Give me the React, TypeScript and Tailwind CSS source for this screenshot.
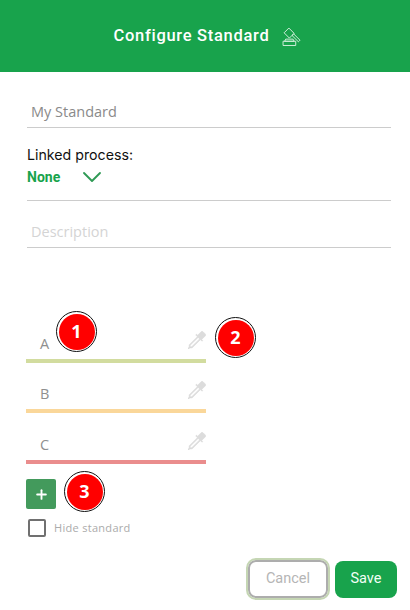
import { ChevronDown, Plus } from 'lucide-react'
import { BsEyedropper } from 'react-icons/bs'

function Badge({ n, className }: { n: number; className: string }) {
  return (
    <div className={`absolute flex h-[41px] w-[41px] items-center justify-center rounded-full border-[1.5px] border-[#111111] bg-white ${className}`}>
      <div className="flex h-[36px] w-[36px] items-center justify-center rounded-full bg-[#ff0000] font-['Open_Sans',sans-serif] text-[18px] font-bold text-white">
        {n}
      </div>
    </div>
  )
}

function Gavel() {
  return (
    <svg width="19" height="19" viewBox="0 0 18 18" fill="none" stroke="currentColor" strokeWidth="0.9" strokeLinejoin="round" className="text-[#d7f0df]">
      <path d="M2 5.5l4.5-4.5 5 5-4.5 4.5z" />
      <path d="M9.5 8l1.5-1.5 6 6-1.5 1.5z" />
      <path d="M3.5 11.5h7l1 2h-9z" />
      <path d="M1 13.5h12v4H1z" />
    </svg>
  )
}

function ColorRow({ label, color, className = '' }: { label: string; color: string; className?: string }) {
  return (
    <div className={`w-[180px] ${className}`}>
      <div className="flex h-[37px] justify-between">
        <span className="ml-[14px] mt-[12px] font-['Open_Sans',sans-serif] text-[14.5px] leading-[20px] text-[#8f8f8f]">{label}</span>
        <BsEyedropper size={18} stroke="currentColor" strokeWidth={0.5} className="mt-[9px] text-[#dcdcdc]" />
      </div>
      <div className={`h-[4px] ${color}`} />
    </div>
  )
}

export default function App() {
  return (
    <div className="h-[610px] w-[410px] overflow-hidden bg-white font-['Roboto',sans-serif]">
      <div className="flex h-[72px] items-center justify-center gap-[13px] bg-[#18a34c] pl-[5px]">
        <span className="text-[16.5px] font-medium tracking-[0.7px] text-white">Configure Standard</span>
        <Gavel />
      </div>

      <div className="relative pl-[27px] pr-[19px] pt-[28px]">
        <div className="h-[28px] border-b border-[#cccccc] pl-[4px] font-['Open_Sans',sans-serif] text-[14.5px] leading-[24px] text-[#8a8a8a]">
          My Standard
        </div>
        <div className="mt-[17px] font-['Inter',sans-serif] text-[14.2px] leading-[19px] text-[#111111]">Linked process:</div>
        <div className="flex h-[37px] items-start border-b border-[#cccccc]">
          <span className="mt-[3px] text-[14px] font-bold leading-[20px] text-[#18a34c]">None</span>
          <ChevronDown size={32} strokeWidth={1.4} className="-mt-[3px] ml-[16px] text-[#2f9a55]" />
        </div>
        <div className="mt-[18px] h-[29px] border-b border-[#cccccc] pl-[4px] font-['Open_Sans',sans-serif] text-[14.5px] leading-[25px] text-[#d4d4d4]">
          Description
        </div>

        <div className="-ml-[1px] mt-[74px] flex flex-col gap-[9px]">
          <ColorRow label="A" color="bg-[#d2dc9f]" />
          <ColorRow label="B" color="bg-[#fad79a]" />
          <ColorRow label="C" color="bg-[#ea8d8d]" className="mt-[1px]" />
        </div>

        <button className="-ml-[1px] mt-[15px] flex h-[30px] w-[30px] items-center justify-center rounded-[2px] bg-[#439a5c] text-white">
          <Plus size={15} strokeWidth={3} />
        </button>

        <label className="mt-[10px] flex items-center gap-[8px] pl-[1px]">
          <span className="h-[18px] w-[18px] rounded-[2px] border-2 border-[#707070]" />
          <span className="font-['Open_Sans',sans-serif] text-[11px] tracking-[0.3px] text-[#ababab]">Hide standard</span>
        </label>

        <Badge n={1} className="left-[56px] top-[239px]" />
        <Badge n={2} className="left-[215px] top-[245px]" />
        <Badge n={3} className="left-[64px] top-[399px]" />
      </div>

      <div className="mr-[13px] mt-[23px] flex items-center justify-end gap-[7px]">
        <button className="h-[38px] w-[80px] rounded-[8px] border-2 border-[#adadad] text-[14.5px] text-[#b5b5b5] outline-2 outline-[#c5d6b4]">
          Cancel
        </button>
        <button className="h-[37px] w-[62px] rounded-[8px] bg-[#18a34c] text-[14.5px] text-[#f2fff6]">Save</button>
      </div>
    </div>
  )
}
